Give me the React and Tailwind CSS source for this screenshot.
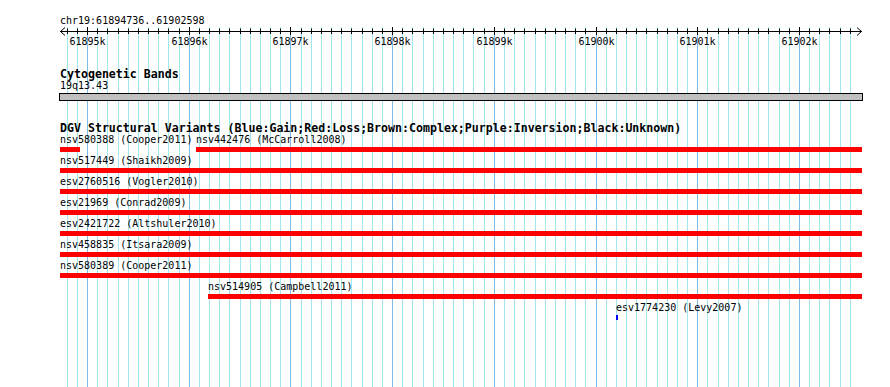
import React from "react";

const START = 61894736;
const PX_PER_BP = 0.10171;
const X0 = 60.15;
const toX = (bp) => X0 + (bp - START) * PX_PER_BP;

// tick positions every 100bp, majors every 1kb
const ticks = [];
for (let bp = 61894800; bp <= 61902500; bp += 100) {
  ticks.push({ bp, x: Math.round(toX(bp)) + 0.5, major: bp % 1000 === 0 });
}

const tracks = [
  [
    { name: "nsv580388 (Cooper2011)", x: 60, w: 20, color: "#ff0000" },
    { name: "nsv442476 (McCarroll2008)", x: 196, w: 666, color: "#ff0000" },
  ],
  [{ name: "nsv517449 (Shaikh2009)", x: 60, w: 802, color: "#ff0000" }],
  [{ name: "esv2760516 (Vogler2010)", x: 60, w: 802, color: "#ff0000" }],
  [{ name: "esv21969 (Conrad2009)", x: 60, w: 802, color: "#ff0000" }],
  [{ name: "esv2421722 (Altshuler2010)", x: 60, w: 802, color: "#ff0000" }],
  [{ name: "nsv458835 (Itsara2009)", x: 60, w: 802, color: "#ff0000" }],
  [{ name: "nsv580389 (Cooper2011)", x: 60, w: 802, color: "#ff0000" }],
  [{ name: "nsv514905 (Campbell2011)", x: 208, w: 654, color: "#ff0000" }],
  [{ name: "esv1774230 (Levy2007)", x: 616, w: 2, color: "#0000ff" }],
];

function Grid() {
  return (
    <svg className="absolute inset-0" width="890" height="387">
      {ticks.map((t) => (
        <line
          key={t.bp}
          x1={t.x}
          x2={t.x}
          y1="27"
          y2="387"
          stroke={t.major ? "#7cbce8" : "#a2e6ee"}
          strokeWidth="1"
        />
      ))}
    </svg>
  );
}

function Axis() {
  return (
    <svg width="890" height="20" className="block">
      <line x1="60" x2="862" y1="4.5" y2="4.5" stroke="#000" />
      <polyline points="65,0.5 60.5,4.5 65,8.5" fill="none" stroke="#000" />
      <polyline points="857,0.5 861.5,4.5 857,8.5" fill="none" stroke="#000" />
      {ticks.map((t) => (
        <line
          key={t.bp}
          x1={t.x}
          x2={t.x}
          y1={t.major ? 0 : 1.5}
          y2={t.major ? 8 : 7}
          stroke="#000"
        />
      ))}
      {ticks
        .filter((t) => t.major)
        .map((t) => (
          <text
            key={t.bp}
            x={t.x}
            y="18"
            textAnchor="middle"
            fontSize="10"
            fontFamily="'DejaVu Sans Mono', monospace"
            fill="#000"
          >
            {t.bp / 1000}k
          </text>
        ))}
    </svg>
  );
}

function TrackRow({ items }) {
  return (
    <div className="relative h-[21px]">
      {items.map((it) => (
        <div key={it.name} className="absolute top-0" style={{ left: it.x }}>
          <div className="leading-[12px] whitespace-nowrap">{it.name}</div>
          <div
            className="mt-[1px] h-[5px]"
            style={{ width: it.w, backgroundColor: it.color }}
          />
        </div>
      ))}
    </div>
  );
}

export default function App() {
  return (
    <div className="relative w-[890px] h-[387px] overflow-hidden bg-white text-black text-[10px] font-['DejaVu_Sans_Mono',monospace]">
      <Grid />
      <div className="relative pt-[15px]">
        <div className="pl-[60px] leading-[12px]">chr19:61894736..61902598</div>
        <Axis />

        <div className="mt-[21px] pl-[60px] text-[11.6px] font-bold leading-[12px]">
          Cytogenetic Bands
        </div>
        <div className="pl-[60px] leading-[12px]">19q13.43</div>
        <div className="ml-[59px] mt-[1px] h-[8px] w-[804px] border border-black bg-[#c0c0c0]" />

        <div className="mt-[21px] pl-[60px] text-[11.6px] font-bold leading-[12px] whitespace-nowrap">
          DGV Structural Variants (Blue:Gain;Red:Loss;Brown:Complex;Purple:Inversion;Black:Unknown)
        </div>
        <div>
          {tracks.map((items, i) => (
            <TrackRow key={i} items={items} />
          ))}
        </div>
      </div>
    </div>
  );
}
